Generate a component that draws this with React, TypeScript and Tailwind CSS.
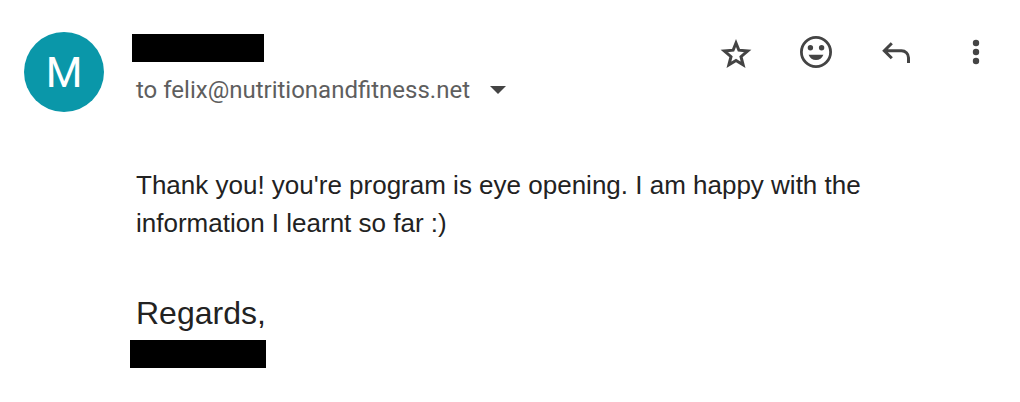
import type { ReactNode } from 'react';

type Action = {
  label: string;
  icon: ReactNode;
};

const ACTIONS: Action[] = [
  {
    label: 'Star',
    icon: (
      <svg width="40" height="40" viewBox="0 0 40 40" fill="none" stroke="currentColor" strokeWidth="3" aria-hidden="true">
        <path d="M20 11l2.900 7.200 8.800.8-6.700 5.700 2.100 8.100-7.100-4.400-7.100 4.400 2.100-8.100-6.700-5.700 8.800-.8z" />
      </svg>
    ),
  },
  {
    label: 'Add reaction',
    icon: (
      <svg width="40" height="40" viewBox="0 0 40 40" fill="currentColor" aria-hidden="true">
        <circle cx="20" cy="20" r="14.6" fill="none" stroke="currentColor" strokeWidth="2.8" />
        <circle cx="14.4" cy="15.8" r="2.7" />
        <circle cx="25.6" cy="15.8" r="2.7" />
        <path d="M12.6 22.7h14.8c-1.3 3.3-4 5.3-7.4 5.3s-6.1-2-7.4-5.3z" />
      </svg>
    ),
  },
  {
    label: 'Reply',
    icon: (
      <svg width="40" height="40" viewBox="0 0 40 40" fill="none" stroke="currentColor" strokeWidth="3" aria-hidden="true">
        <path d="M15.8 11.2 8.3 18.7l7.5 7.5M8.3 18.7h17.2a7 7 0 0 1 7 7v5.3" />
      </svg>
    ),
  },
  {
    label: 'More',
    icon: (
      <svg width="40" height="40" viewBox="0 0 40 40" fill="currentColor" aria-hidden="true">
        <circle cx="20" cy="11" r="3.2" />
        <circle cx="20" cy="20" r="3.2" />
        <circle cx="20" cy="29" r="3.2" />
      </svg>
    ),
  },
];

export default function App() {
  return (
    <article className="bg-white px-6 pt-8 font-['Liberation_Sans',Arial,sans-serif] text-[#222]">
      <header className="flex items-start gap-7">
        <div className="flex size-20 shrink-0 items-center justify-center rounded-full bg-[#0a97a9] pt-0.5 font-['Roboto',sans-serif] text-[42px] leading-none text-white">
          M
        </div>
        <div className="flex-1 pt-0.5">
          <div className="h-7 w-33 bg-black" />
          <button className="mt-3 flex items-center gap-5 pl-1 font-['Roboto',sans-serif] text-2xl text-[#5e5e5e]">
            to felix@nutritionandfitness.net
            <svg width="16" height="8" viewBox="0 0 16 8" fill="#444" aria-hidden="true">
              <path d="M0 0h16L8 8z" />
            </svg>
          </button>
        </div>
        <div className="flex gap-10 text-[#444]">
          {ACTIONS.map((a) => (
            <button key={a.label} aria-label={a.label} className="flex size-10 items-center justify-center">
              {a.icon}
            </button>
          ))}
        </div>
      </header>
      <div className="pt-13.5 pl-28">
        <p className="max-w-3xl text-[26px] leading-[38px]">
          Thank you! you're program is eye opening. I am happy with the information I learnt so far :)
        </p>
        <p className="mt-12 text-[32px] leading-[46px]">Regards,</p>
        <div className="mt-1 -ml-1.5 h-7 w-34 bg-black" />
      </div>
    </article>
  );
}
